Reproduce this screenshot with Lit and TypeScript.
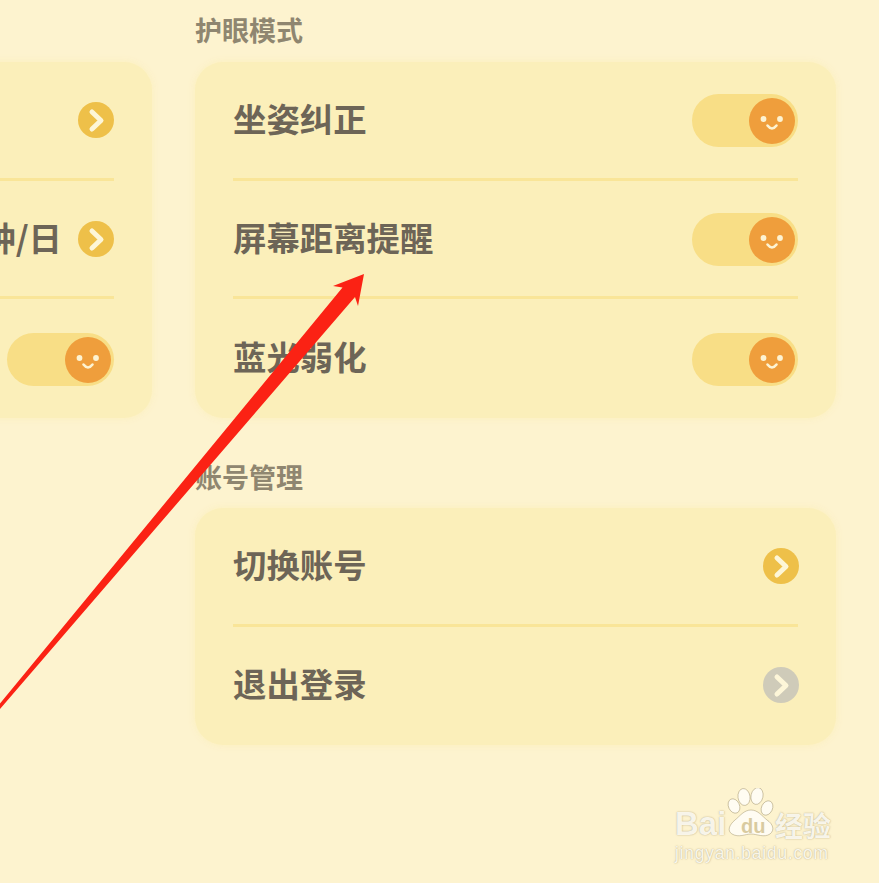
import { LitElement, html, css, svg } from "lit";
import { customElement } from "lit/decorators.js";

const chevron = (grey = false) => html`<svg class="chev" width="36" height="36" viewBox="0 0 36 36">
  <circle cx="18" cy="18" r="18" fill=${grey ? "#cfcbb9" : "#eec049"}></circle>
  <path d="M14 10 L23 18.5 L14 27" fill="none" stroke="#fdf6d8" stroke-width="5" stroke-linecap="round" stroke-linejoin="round"></path>
</svg>`;

const toggle = () => html`<div class="toggle">
  <svg class="knob" width="46" height="46" viewBox="0 0 46 46">
    <circle cx="23" cy="23" r="23" fill="#ef9e3c"></circle>
    <circle cx="14.5" cy="21" r="2.9" fill="#fdf3d2"></circle>
    <circle cx="31" cy="21" r="2.9" fill="#fdf3d2"></circle>
    <path d="M18.5 27.5 Q23 33.5 27.5 27.5" fill="none" stroke="#fdf3d2" stroke-width="2.6" stroke-linecap="round"></path>
  </svg>
</div>`;

@customElement("app-root")
export class AppRoot extends LitElement {
  static styles = css`
    :host {
      display: block;
      width: 879px;
      height: 883px;
      overflow: hidden;
      position: relative;
      background: #fdf3cf;
      font-family: "Noto Sans CJK SC", "Noto Sans", sans-serif;
    }
    .columns {
      display: grid;
      grid-template-columns: 152px 641px;
      column-gap: 43px;
    }
    .left {
      padding-top: 62px;
    }
    .left .card {
      margin-left: -120px;
      padding: 0 38px 0 38px;
    }
    .label {
      box-sizing: border-box;
      height: 62px;
      line-height: 60px;
      font-size: 27px;
      font-weight: 700;
      color: #8f8670;
      white-space: nowrap;
    }
    .label.second {
      margin-top: 30px;
      height: 60px;
      line-height: 58px;
    }
    .card {
      background: #fbefba;
      border-radius: 28px;
      padding: 0 38px;
      box-shadow: 0 0 7px rgba(252, 239, 186, 0.95);
    }
    .row {
      height: 118.7px;
      display: flex;
      align-items: center;
      justify-content: space-between;
      box-sizing: border-box;
      font-size: 33.4px;
      font-weight: 700;
      color: #6d6557;
      border-bottom: 3px solid #f9e598;
      white-space: nowrap;
    }
    .row:last-child {
      border-bottom-color: transparent;
    }
    .row span {
      padding-bottom: 4px;
    }
    .row.end {
      justify-content: flex-end;
      gap: 16px;
      font-weight: 600;
    }
    .chev {
      flex: none;
      display: block;
      margin-top: 1px;
    }
    .right .chev {
      margin-right: -1px;
    }
    .toggle {
      flex: none;
      width: 106px;
      height: 53px;
      margin-top: 2px;
      box-sizing: border-box;
      border-radius: 27px;
      background: #f8de86;
      display: flex;
      align-items: center;
      justify-content: flex-end;
      padding-right: 3px;
    }
    .row:last-child .toggle {
      margin-top: 5px;
    }
    .left .toggle {
      width: 107px;
    }
    .knob {
      display: block;
    }
    .arrow {
      position: absolute;
      left: 0;
      top: 0;
      pointer-events: none;
    }
    .mark {
      position: absolute;
      left: 675px;
      top: 788px;
      width: 160px;
      height: 76px;
      color: rgba(255, 253, 245, 0.92);
      text-shadow: 0 0 1.5px rgba(150, 135, 95, 0.8);
      font-family: "Liberation Sans", sans-serif;
      pointer-events: none;
    }
    .mark svg {
      position: absolute;
      left: 42px;
      top: 0;
    }
    .bai {
      position: absolute;
      left: 0;
      top: 18px;
      font-size: 33px;
      line-height: 36px;
      font-weight: 700;
    }
    .du {
      position: absolute;
      left: 66px;
      top: 27px;
      font-size: 20px;
      line-height: 22px;
      font-weight: 700;
      color: #d9cba0;
      text-shadow: none;
    }
    .jy {
      position: absolute;
      left: 100px;
      top: 19px;
      font-family: "Noto Sans CJK SC", sans-serif;
      font-size: 28px;
      line-height: 36px;
      font-weight: 700;
    }
    .url {
      position: absolute;
      left: 0;
      top: 54px;
      font-size: 17.5px;
      line-height: 22px;
      letter-spacing: 0.75px;
      white-space: nowrap;
    }
  `;

  render() {
    return html`
      <div class="columns">
        <div class="left">
          <div class="card">
            <div class="row end">${chevron()}</div>
            <div class="row end"><span>30分钟/日</span>${chevron()}</div>
            <div class="row end">${toggle()}</div>
          </div>
        </div>
        <div class="right">
          <div class="label">护眼模式</div>
          <div class="card">
            <div class="row"><span>坐姿纠正</span>${toggle()}</div>
            <div class="row"><span>屏幕距离提醒</span>${toggle()}</div>
            <div class="row"><span>蓝光弱化</span>${toggle()}</div>
          </div>
          <div class="label second">账号管理</div>
          <div class="card">
            <div class="row"><span>切换账号</span>${chevron()}</div>
            <div class="row"><span>退出登录</span>${chevron(true)}</div>
          </div>
        </div>
      </div>

      <svg class="arrow" width="879" height="883" viewBox="0 0 879 883">
        ${svg`<path d="M364 274 L333 286 L342.5 287.5 L-2 706 L0 709 L355 297 L358 306 Z" fill="#fb2214"></path>`}
      </svg>

      <div class="mark">
        <svg width="76" height="66" viewBox="0 0 76 66">
          <g fill="rgba(255,253,245,0.92)" stroke="rgba(150,135,95,0.55)" stroke-width="0.8">
            <ellipse cx="17" cy="18" rx="5.5" ry="7.5" transform="rotate(-25 17 18)"></ellipse>
            <ellipse cx="27" cy="9" rx="6" ry="8.5" transform="rotate(-8 27 9)"></ellipse>
            <ellipse cx="40" cy="8" rx="6" ry="8.5" transform="rotate(12 40 8)"></ellipse>
            <ellipse cx="50" cy="20" rx="5.5" ry="7.5" transform="rotate(25 50 20)"></ellipse>
            <path d="M34 22 C27 22 23 28 18 32 C12 37 10 43 15 46 C22 50 28 46 34 46 C40 46 47 50 53 46 C58 42 56 36 50 32 C45 28 41 22 34 22 Z"></path>
          </g>
        </svg>
        <span class="bai">Bai</span>
        <span class="du">du</span>
        <span class="jy">经验</span>
        <span class="url">jingyan.baidu.com</span>
      </div>
    `;
  }
}
